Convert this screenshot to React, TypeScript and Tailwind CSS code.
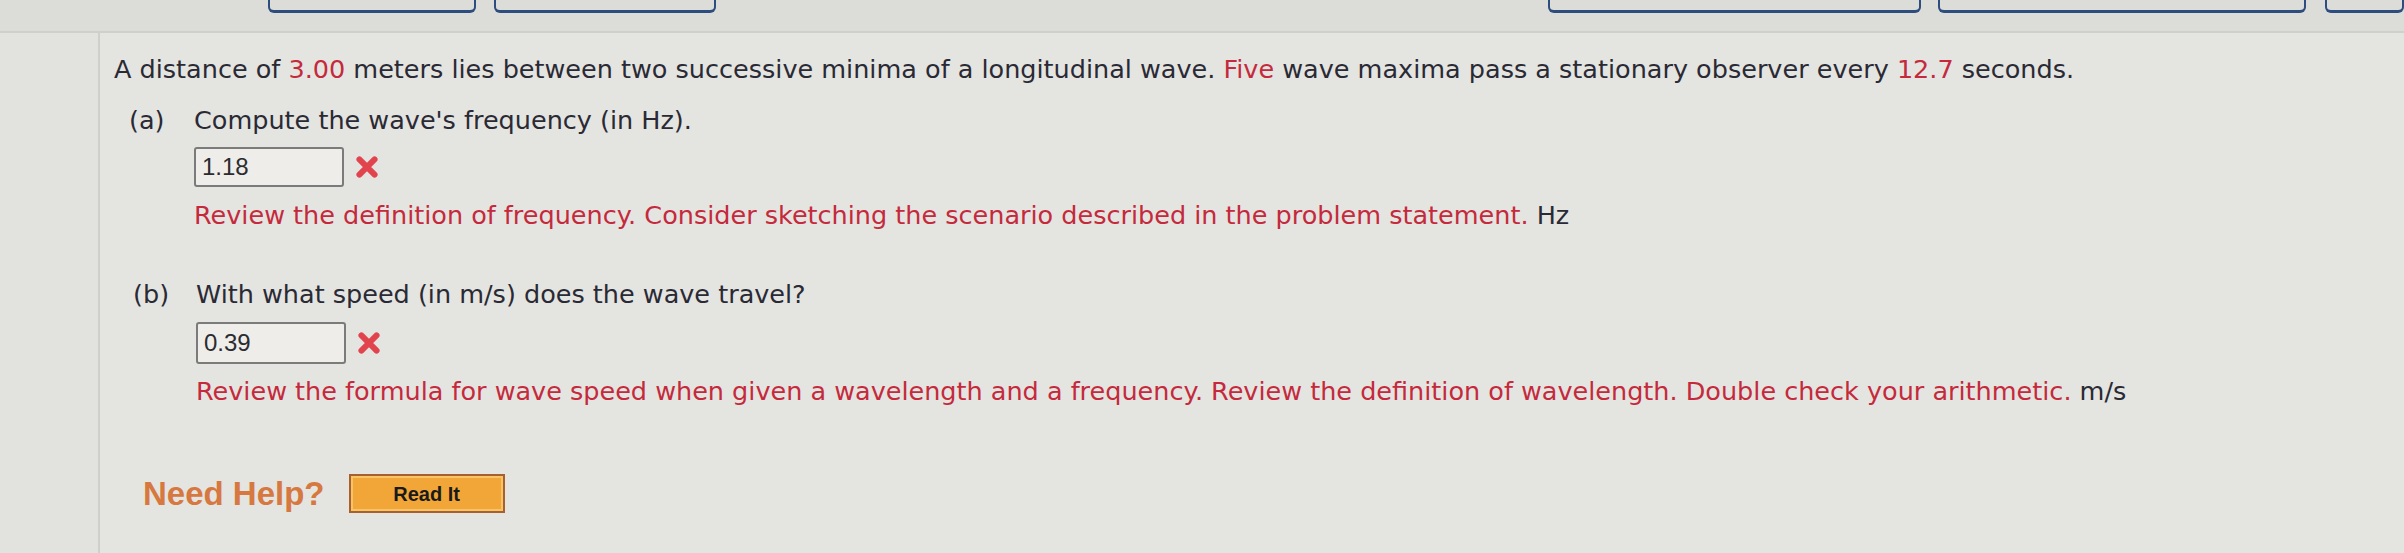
import React from "react";

function WrongMark() {
  return (
    <svg viewBox="0 0 24 24" className="h-[26px] w-[26px] shrink-0">
      <path
        d="M5 5 L19 19 M19 5 L5 19"
        stroke="#e2444e"
        strokeWidth="5.5"
        strokeLinecap="round"
      />
    </svg>
  );
}

function AnswerBox({ value }: { value: string }) {
  return (
    <div className="flex items-center gap-[10px]">
      <div className="flex h-[40px] w-[150px] items-center rounded-[3px] border-2 border-[#7b7b7b] bg-[#eeedea] px-[6px] font-['Liberation_Sans',Arial,sans-serif] text-[24px] text-[#2b2b30]">
        {value}
      </div>
      <WrongMark />
    </div>
  );
}

export default function App() {
  return (
    <div className="flex h-[553px] w-[2404px] flex-col overflow-hidden bg-[#e4e4e1] font-['DejaVu_Sans',Verdana,sans-serif] text-[#2a2a34]">
      {/* top strip with the tab buttons */}
      <div className="flex h-[33px] shrink-0 items-start border-b-2 border-[#cfcfcc] bg-[#dcdcd9]">
        <div className="ml-[268px] h-[13px] w-[212px] rounded-b-[6px] border-x-2 border-b-[3px] border-[#2d4d7e]" />
        <div className="ml-[18px] h-[13px] w-[226px] rounded-b-[6px] border-x-2 border-b-[3px] border-[#2d4d7e]" />
        <div className="ml-[832px] h-[13px] w-[379px] rounded-b-[6px] border-x-2 border-b-[3px] border-[#2d4d7e]" />
        <div className="ml-[17px] h-[13px] w-[375px] rounded-b-[6px] border-x-2 border-b-[3px] border-[#2d4d7e]" />
        <div className="ml-[19px] h-[13px] w-[80px] rounded-b-[6px] border-x-2 border-b-[3px] border-[#2d4d7e]" />
      </div>

      <div className="flex flex-1">
        <div className="w-[100px] shrink-0 border-r-2 border-[#cfcfcc] bg-[#e2e2df]" />

        <div className="flex-1 pl-[14px] text-[25.5px] leading-[36px]">
          <p className="mt-[18px]">
            A distance of <span className="text-[#c42a3c]">3.00</span> meters lies between two
            successive minima of a longitudinal wave. <span className="text-[#c42a3c]">Five</span>{" "}
            wave maxima pass a stationary observer every{" "}
            <span className="text-[#c42a3c]">12.7</span> seconds.
          </p>

          {/* part (a) */}
          <div className="mt-[15px] flex pl-[15px]">
            <span className="w-[65px] shrink-0">(a)</span>
            <div>
              <p>Compute the wave's frequency (in Hz).</p>
              <div className="mt-[9px]">
                <AnswerBox value="1.18" />
              </div>
              <p className="mt-[10px]">
                <span className="text-[#c42a3c]">
                  Review the definition of frequency. Consider sketching the scenario described in
                  the problem statement.
                </span>{" "}
                Hz
              </p>
            </div>
          </div>

          {/* part (b) */}
          <div className="mt-[43px] flex pl-[19px]">
            <span className="w-[63px] shrink-0">(b)</span>
            <div>
              <p>With what speed (in m/s) does the wave travel?</p>
              <div className="mt-[10px]">
                <div className="flex items-center gap-[10px]">
                  <div className="flex h-[42px] w-[150px] items-center rounded-[3px] border-2 border-[#7b7b7b] bg-[#eeedea] px-[6px] font-['Liberation_Sans',Arial,sans-serif] text-[24px] text-[#2b2b30]">
                    0.39
                  </div>
                  <WrongMark />
                </div>
              </div>
              <p className="mt-[9px]">
                <span className="text-[#c42a3c]">
                  Review the formula for wave speed when given a wavelength and a frequency. Review
                  the definition of wavelength. Double check your arithmetic.
                </span>{" "}
                m/s
              </p>
            </div>
          </div>

          {/* help */}
          <div className="mt-[65px] flex items-center gap-[24px] pl-[29px] font-['Liberation_Sans',Arial,sans-serif]">
            <span className="text-[33px] font-bold leading-none text-[#d6783f]">Need Help?</span>
            <button className="flex h-[39px] w-[156px] items-center justify-center border-2 border-[#a8602f] bg-[#f2a637] shadow-[inset_0_0_0_2px_#f8c468]">
              <span className="text-[20px] font-bold text-[#1a1a1a]">Read It</span>
            </button>
          </div>
        </div>
      </div>
    </div>
  );
}
